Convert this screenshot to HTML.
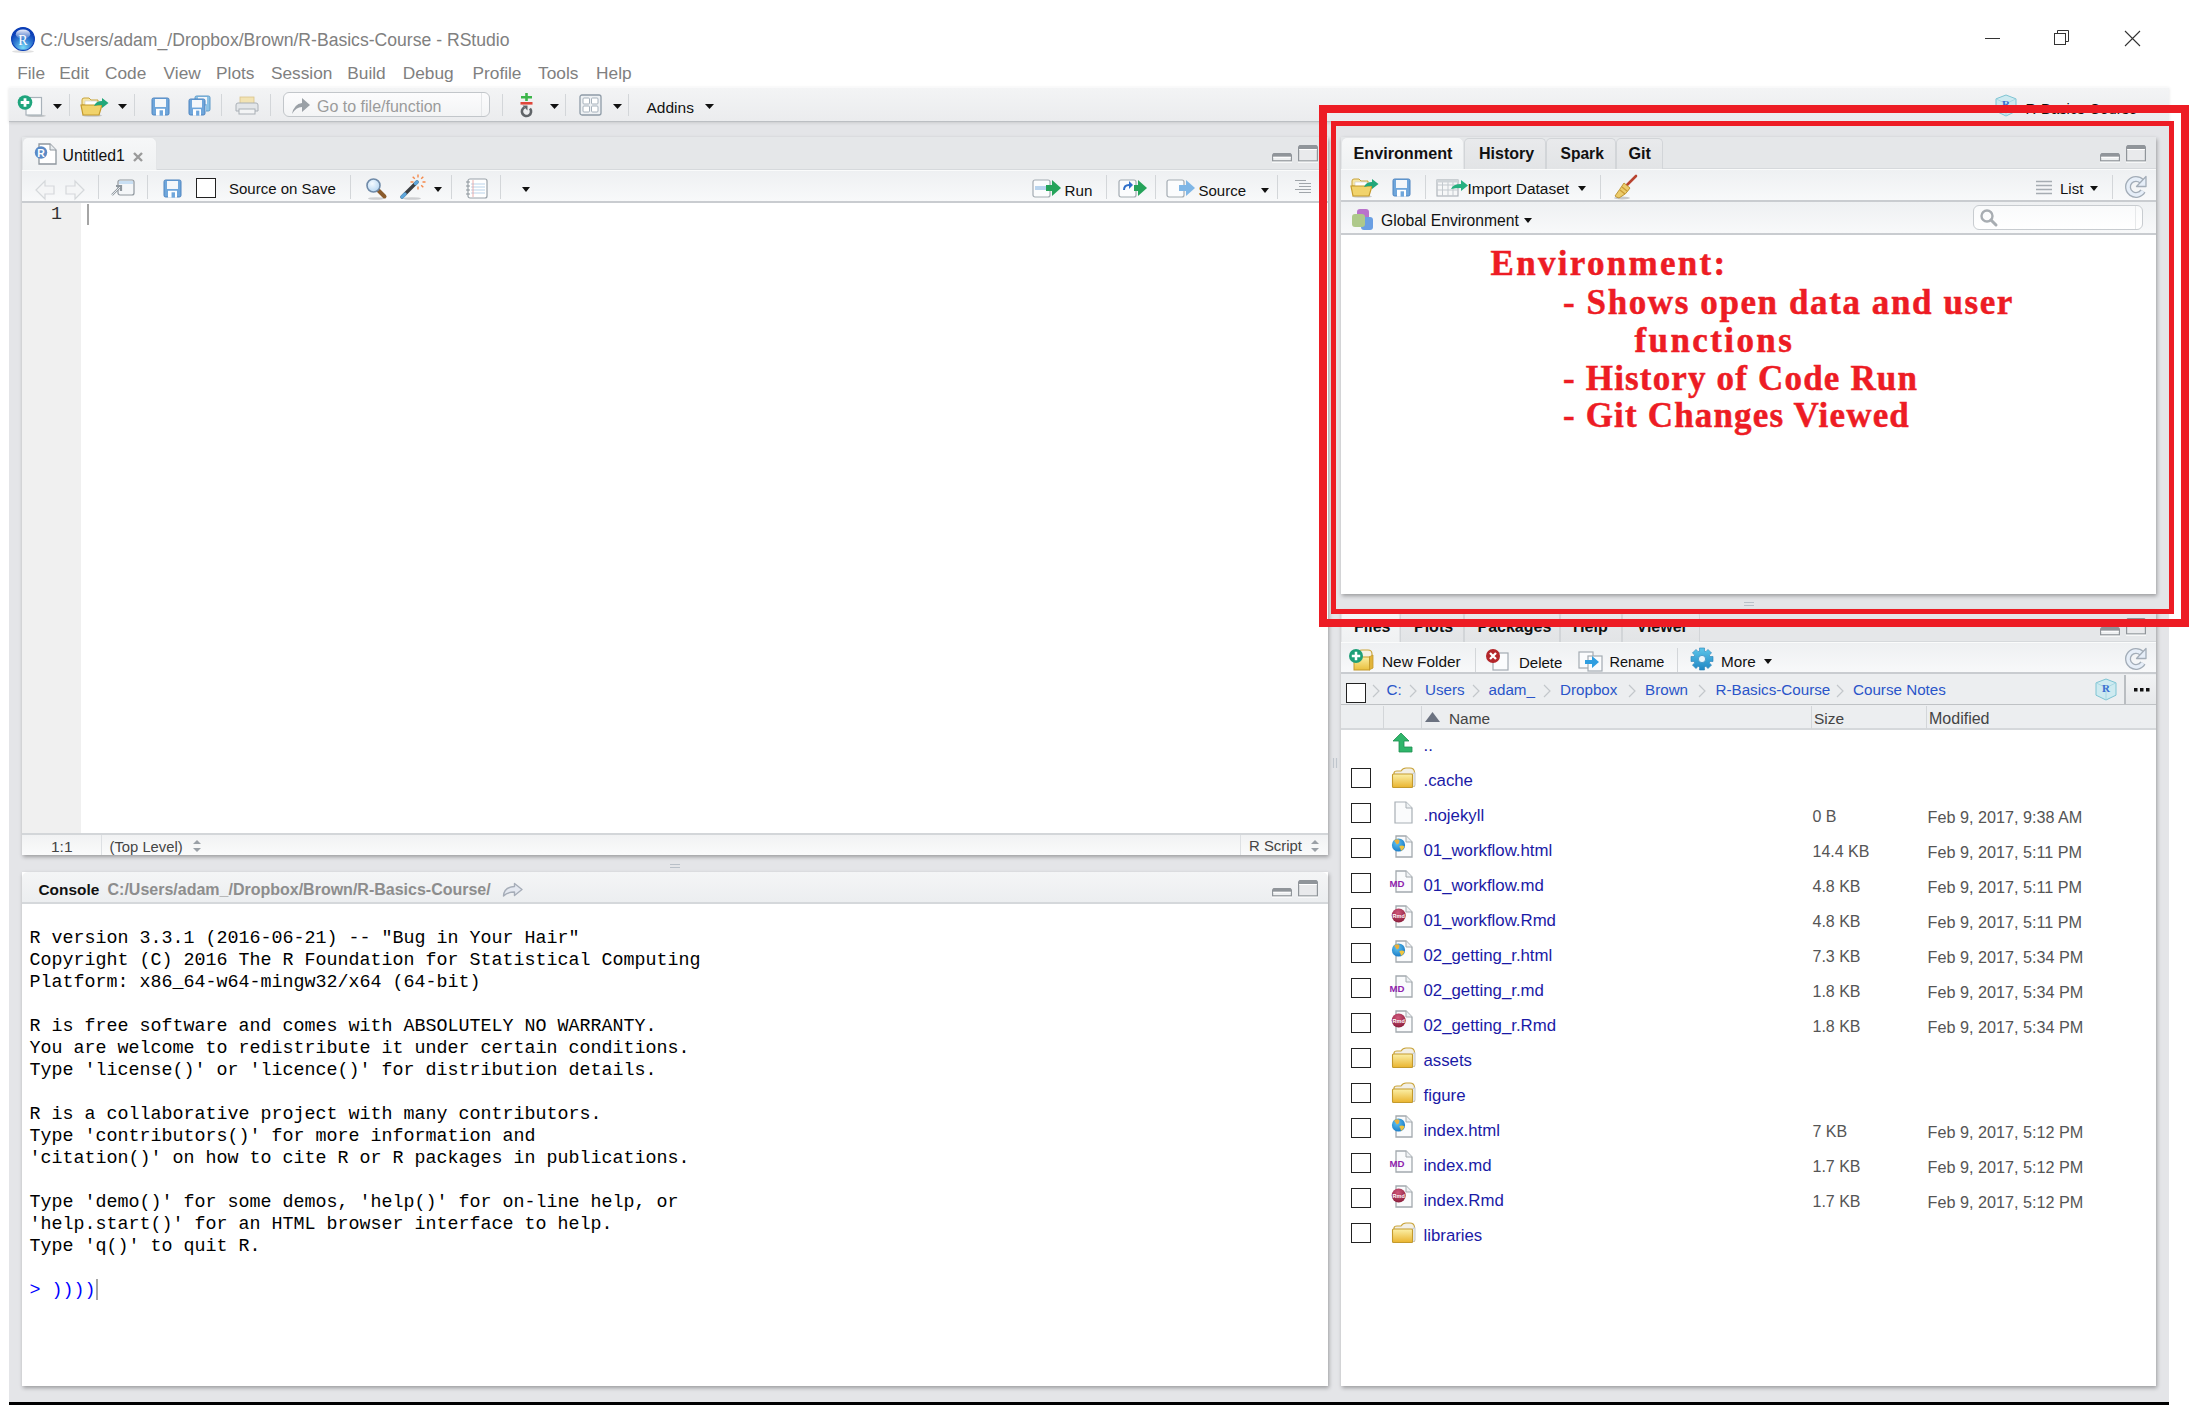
<!DOCTYPE html>
<html><head><meta charset="utf-8"><title>RStudio</title>
<style>
*{box-sizing:border-box;margin:0;padding:0}
html,body{width:2199px;height:1412px;overflow:hidden;background:#fff;position:relative;font-family:"Liberation Sans",sans-serif;color:#000}
.a{position:absolute;overflow:visible}
.t{position:absolute;white-space:pre;line-height:1}
</style></head>
<body>
<svg class="a" style="left:11px;top:27px" width="24" height="26" viewBox="0 0 24 26"><defs><radialGradient id="rlg" cx="50%" cy="88%" r="70%"><stop offset="0" stop-color="#78daf7"/><stop offset=".6" stop-color="#2f78d0"/><stop offset="1" stop-color="#0b3fb8"/></radialGradient>
<linearGradient id="rlh" x1="0" y1="0" x2="0" y2="1"><stop offset="0" stop-color="#fff" stop-opacity=".95"/><stop offset="1" stop-color="#fff" stop-opacity=".1"/></linearGradient></defs>
<ellipse cx="12.0" cy="24.5" rx="11.0" ry="1.5" fill="#000" opacity=".12"/>
<circle cx="12.0" cy="12.0" r="11.4" fill="url(#rlg)" stroke="#0a3db5" stroke-width="1.1"/>
<ellipse cx="12.0" cy="7.199999999999999" rx="7.199999999999999" ry="4.800000000000001" fill="url(#rlh)"/>
<text x="12.0" y="18.0" font-family="Liberation Serif" font-weight="400" font-size="13.919999999999998" fill="#fff" text-anchor="middle">R</text></svg>
<div class="t" style="left:40.2px;top:32.1px;font-size:17.6px;color:#808080;">C:/Users/adam_/Dropbox/Brown/R-Basics-Course - RStudio</div>
<div class="a" style="left:1985px;top:38px;width:15px;height:1px;background:#333"></div>
<svg class="a" style="left:2053px;top:29px" width="18" height="18" viewBox="0 0 18 18"><rect x="1.5" y="4.5" width="11" height="11" fill="none" stroke="#333" stroke-width="1"/><path d="M4.5 4.5V1.5H15.5V12.5H12.5" fill="none" stroke="#333" stroke-width="1"/></svg>
<svg class="a" style="left:2124px;top:30px" width="17" height="17" viewBox="0 0 17 17"><path d="M1 1L16 16M16 1L1 16" stroke="#333" stroke-width="1.1"/></svg>
<div class="t" style="left:17.2px;top:65.0px;font-size:17.3px;color:#808080;">File</div>
<div class="t" style="left:59.3px;top:65.0px;font-size:17.3px;color:#808080;">Edit</div>
<div class="t" style="left:105.0px;top:65.0px;font-size:17.3px;color:#808080;">Code</div>
<div class="t" style="left:163.6px;top:65.0px;font-size:17.3px;color:#808080;">View</div>
<div class="t" style="left:216.1px;top:65.0px;font-size:17.3px;color:#808080;">Plots</div>
<div class="t" style="left:270.9px;top:65.0px;font-size:17.3px;color:#808080;">Session</div>
<div class="t" style="left:347.3px;top:65.0px;font-size:17.3px;color:#808080;">Build</div>
<div class="t" style="left:402.7px;top:65.0px;font-size:17.3px;color:#808080;">Debug</div>
<div class="t" style="left:472.5px;top:65.0px;font-size:17.3px;color:#808080;">Profile</div>
<div class="t" style="left:538.1px;top:65.0px;font-size:17.3px;color:#808080;">Tools</div>
<div class="t" style="left:596.1px;top:65.0px;font-size:17.3px;color:#808080;">Help</div>
<div class="a" style="left:9px;top:87px;width:2160px;height:1317px;background:#e4e5e8"></div>
<div class="a" style="left:9px;top:87px;width:2160px;height:35px;background:linear-gradient(#f3f4f5,#ebecee);border-top:1px solid #f9f9fa;border-bottom:1.5px solid #bcbfc3;box-shadow:0 1px 3px rgba(0,0,0,.12)"></div>
<div class="a" style="left:9px;top:1402px;width:2160px;height:3px;background:#000"></div>
<svg class="a" style="left:16px;top:93px" width="32" height="26" viewBox="0 0 32 26"><ellipse cx="20" cy="22.8" rx="10" ry="1.3" fill="#7d8288" opacity=".4"/>
<rect x="10" y="4.5" width="15.5" height="17.5" fill="#fbfcfd" stroke="#a9b2ba" stroke-width="1.2"/>
<circle cx="9" cy="9.5" r="7.3" fill="#1fa57d"/><path d="M9 5.2V13.8M4.7 9.5H13.3" stroke="#fff" stroke-width="2.8"/></svg>
<svg class="a" style="left:53px;top:104px" width="9" height="5" viewBox="0 0 9 5"><path d="M0 0H9L4.5 5Z" fill="#111"/></svg>
<div class="a" style="left:69px;top:94px;width:1px;height:22px;background:#d3d6d9"></div>
<svg class="a" style="left:80px;top:95px" width="30" height="22" viewBox="0 0 30 22"><ellipse cx="12" cy="20.5" rx="10" ry="1.3" fill="#8c8f93" opacity=".4"/>
<path d="M2 5Q2 3 4 3H9L11 5H18V10H2Z" fill="#f6e6a6" stroke="#c9a43a" stroke-width="1"/>
<path d="M5 6H17V11H5Z" fill="#fff" stroke="#d0d0d0" stroke-width=".7"/>
<path d="M1 10H22L19 20H3Z" fill="#f1d36b" stroke="#c49a2c" stroke-width="1.2"/>
<path d="M14 11Q16 6 22 6V3L28.5 8L22 13V10Q17 10 14 11Z" fill="#22a77a"/></svg>
<svg class="a" style="left:118px;top:104px" width="9" height="5" viewBox="0 0 9 5"><path d="M0 0H9L4.5 5Z" fill="#111"/></svg>
<div class="a" style="left:134px;top:94px;width:1px;height:22px;background:#d3d6d9"></div>
<svg class="a" style="left:151px;top:97px" width="19" height="21" viewBox="0 0 19 21"><rect x="1" y="1" width="17" height="17" rx="1.6" fill="#6fa6db" stroke="#4f84bf" stroke-width="1"/>
<rect x="4" y="2" width="11" height="7.9799999999999995" fill="#f4f7fa"/>
<rect x="5" y="11.78" width="9" height="6.84" fill="#fff"/>
<rect x="8.55" y="13.299999999999999" width="3.42" height="5.32" fill="#6fa6db"/></svg>
<svg class="a" style="left:194px;top:95px" width="17" height="19" viewBox="0 0 17 19"><rect x="1" y="1" width="15" height="15" rx="1.6" fill="#8dc3e6" stroke="#5e9ac8" stroke-width="1"/>
<rect x="4" y="2" width="9" height="7.14" fill="#f4f7fa"/>
<rect x="5" y="10.54" width="7" height="6.12" fill="#fff"/>
<rect x="7.65" y="11.899999999999999" width="3.06" height="4.760000000000001" fill="#8dc3e6"/></svg>
<svg class="a" style="left:188px;top:98px" width="18" height="20" viewBox="0 0 18 20"><rect x="1" y="1" width="16" height="16" rx="1.6" fill="#6fa6db" stroke="#4f84bf" stroke-width="1"/>
<rect x="4" y="2" width="10" height="7.56" fill="#f4f7fa"/>
<rect x="5" y="11.16" width="8" height="6.4799999999999995" fill="#fff"/>
<rect x="8.1" y="12.6" width="3.2399999999999998" height="5.040000000000001" fill="#6fa6db"/></svg>
<div class="a" style="left:221px;top:94px;width:1px;height:22px;background:#d3d6d9"></div>
<svg class="a" style="left:235px;top:96px" width="24" height="20" viewBox="0 0 24 20"><rect x="5" y="1" width="14" height="9" fill="#f2e3b3" stroke="#d9c48a" stroke-width=".8"/>
<path d="M1 9Q1 7 3 7H21Q23 7 23 9V15H1Z" fill="#e3e6e9" stroke="#aab0b6" stroke-width="1"/>
<rect x="4" y="13" width="16" height="5" fill="#f3f4f5" stroke="#aab0b6" stroke-width="1"/></svg>
<div class="a" style="left:270px;top:94px;width:1px;height:22px;background:#d3d6d9"></div>
<div class="a" style="left:283px;top:92px;width:207px;height:25px;background:linear-gradient(#fcfcfd,#f3f4f5);border:1px solid #c2c6ca;border-radius:6px"></div>
<div class="a" style="left:481px;top:93px;width:1px;height:23px;background:#e4e6e8"></div>
<svg class="a" style="left:291px;top:97px" width="20" height="18" viewBox="0 0 20 18"><path d="M1 17Q3 7 11 6V1L19 8L11 15V10Q5 10 1 17Z" fill="#9aa0a6"/></svg>
<div class="t" style="left:317.0px;top:98.6px;font-size:16px;color:#9b9b9b;">Go to file/function</div>
<div class="a" style="left:502px;top:94px;width:1px;height:22px;background:#d3d6d9"></div>
<svg class="a" style="left:520px;top:93px" width="14" height="26" viewBox="0 0 14 26"><path d="M6.5 0V8M1 4.2H12" stroke="#3cb54a" stroke-width="2.6"/>
<rect x="0.5" y="9" width="12" height="2.6" fill="#e0463a"/>
<path d="M10 15.5A4.6 4.6 0 1 1 4.5 14.3" fill="none" stroke="#606468" stroke-width="2.6"/><path d="M2.5 12.5H7.5V17.5Z" fill="#606468"/></svg>
<svg class="a" style="left:550px;top:104px" width="9" height="5" viewBox="0 0 9 5"><path d="M0 0H9L4.5 5Z" fill="#111"/></svg>
<div class="a" style="left:565px;top:94px;width:1px;height:22px;background:#d3d6d9"></div>
<svg class="a" style="left:579px;top:94px" width="24" height="23" viewBox="0 0 24 23"><rect x="1" y="1" width="21" height="20" rx="2" fill="#eef1f4" stroke="#8e9ba7" stroke-width="1.3"/>
<rect x="4" y="4" width="6.5" height="6" rx="1" fill="#fff" stroke="#a6b1bb"/><rect x="12.5" y="4" width="6.5" height="6" rx="1" fill="#fff" stroke="#a6b1bb"/>
<rect x="4" y="12" width="6.5" height="6" rx="1" fill="#fff" stroke="#a6b1bb"/><rect x="12.5" y="12" width="6.5" height="6" rx="1" fill="#fff" stroke="#a6b1bb"/></svg>
<svg class="a" style="left:613px;top:104px" width="9" height="5" viewBox="0 0 9 5"><path d="M0 0H9L4.5 5Z" fill="#111"/></svg>
<div class="a" style="left:628px;top:94px;width:1px;height:22px;background:#d3d6d9"></div>
<div class="t" style="left:646.5px;top:100.3px;font-size:15.5px;color:#111;">Addins</div>
<svg class="a" style="left:705px;top:104px" width="9" height="5" viewBox="0 0 9 5"><path d="M0 0H9L4.5 5Z" fill="#111"/></svg>
<svg class="a" style="left:1995px;top:94px" width="22" height="24" viewBox="0 0 22 24"><path d="M11.0 1L21 4.84V17.16L11.0 22L1 17.16V4.84Z" fill="#cdeaf0" stroke="#7ec4d3" stroke-width="1"/>
<path d="M1 4.84L11.0 9.68L21 4.84M11.0 9.68V22" fill="none" stroke="#9fd4df" stroke-width=".8"/>
<text x="11.0" y="13.64" font-family="Liberation Serif" font-weight="700" font-size="11.0" fill="#3a6fd0" text-anchor="middle">R</text></svg>
<div class="t" style="left:2025.5px;top:101.7px;font-size:14.8px;color:#111;">R-Basics-Course</div>
<div class="a" style="left:22px;top:137px;width:1306px;height:717.5px;background:#fff;box-shadow:1px 2px 4px rgba(0,0,0,.32)"></div>
<div class="a" style="left:22px;top:137px;width:1306px;height:33px;background:#e5e7e9;border-bottom:1px solid #d6d9dc"></div>
<div class="a" style="left:22px;top:137px;width:135px;height:34px;background:linear-gradient(#f6f7f8,#eff1f2);border-radius:6px 6px 0 0;border:1px solid #e3e5e7;border-bottom:none"></div>
<svg class="a" style="left:32px;top:142px" width="26" height="24" viewBox="0 0 26 24"><path d="M7 2H18L24 8V22H7Z" fill="#fff" stroke="#8f979e" stroke-width="1.3"/><path d="M18 2V8H24" fill="#e8ecef" stroke="#8f979e" stroke-width="1"/>
<circle cx="9" cy="10.5" r="6.2" fill="#5b8ac6"/><text x="9" y="14.5" font-family="Liberation Sans" font-weight="700" font-size="10.5" fill="#fff" text-anchor="middle">R</text></svg>
<div class="t" style="left:62.5px;top:147.5px;font-size:15.8px;color:#111;">Untitled1</div>
<svg class="a" style="left:132px;top:151px" width="12" height="12" viewBox="0 0 12 12"><path d="M2 2L10 10M10 2L2 10" stroke="#9a9a9a" stroke-width="2.4"/></svg>
<svg class="a" style="left:1272px;top:153px" width="20" height="10" viewBox="0 0 20 10"><path d="M1.5 0H18.5L20 1.5V8.5H0V1.5Z" fill="#90959a"/><rect x="1.2" y="3.8" width="17.6" height="3.4" fill="#eef0f1"/><rect x="1.2" y="3.8" width="17.6" height="1" fill="#fff"/><rect x="0" y="8.6" width="20" height="1.2" fill="#fff" opacity=".8"/></svg>
<svg class="a" style="left:1298px;top:144.5px" width="20" height="18" viewBox="0 0 20 18"><path d="M1.5 0H18.5L20 1.5V16.5H0V1.5Z" fill="#90959a"/><rect x="1.2" y="4" width="17.6" height="11.3" fill="#e9eaec"/><rect x="1.2" y="4" width="17.6" height="1" fill="#fff"/><rect x="0" y="16.6" width="20" height="1.2" fill="#fff" opacity=".8"/></svg>
<div class="a" style="left:22px;top:170px;width:1306px;height:33px;background:linear-gradient(#eef0f2,#f8f9fa);border-top:1px solid #fafbfb;border-bottom:2px solid #c9ccd0"></div>
<svg class="a" style="left:35px;top:180px" width="20" height="20" viewBox="0 0 20 20"><path d="M1 10L10 1V6H19V14H10V19Z" fill="#f4f5f6" stroke="#d5d8db" stroke-width="1.2"/></svg>
<svg class="a" style="left:65px;top:180px" width="20" height="20" viewBox="0 0 20 20"><path d="M19 10L10 1V6H1V14H10V19Z" fill="#f4f5f6" stroke="#d5d8db" stroke-width="1.2"/></svg>
<div class="a" style="left:98px;top:175px;width:1px;height:24px;background:#d3d6d9"></div>
<svg class="a" style="left:110px;top:178px" width="26" height="20" viewBox="0 0 26 20"><rect x="8" y="2" width="16" height="15" rx="2" fill="#f4f6f8" stroke="#8f979e" stroke-width="1.2"/><rect x="9" y="3" width="14" height="3" fill="#c9dff3"/>
<path d="M2 17L10 9M6 8H11V13" fill="none" stroke="#8f979e" stroke-width="2.2"/><path d="M2 17L10 9" stroke="#e6e9ec" stroke-width="1"/></svg>
<div class="a" style="left:147px;top:175px;width:1px;height:24px;background:#d3d6d9"></div>
<svg class="a" style="left:163px;top:179px" width="19" height="21" viewBox="0 0 19 21"><rect x="1" y="1" width="17" height="17" rx="1.6" fill="#6fa6db" stroke="#4f84bf" stroke-width="1"/>
<rect x="4" y="2" width="11" height="7.9799999999999995" fill="#f4f7fa"/>
<rect x="5" y="11.78" width="9" height="6.84" fill="#fff"/>
<rect x="8.55" y="13.299999999999999" width="3.42" height="5.32" fill="#6fa6db"/></svg>
<div class="a" style="left:196px;top:178px;width:20px;height:20px;background:#fff;border:1.5px solid #222"></div>
<div class="t" style="left:229.0px;top:180.8px;font-size:15px;color:#111;">Source on Save</div>
<div class="a" style="left:350px;top:175px;width:1px;height:24px;background:#d3d6d9"></div>
<svg class="a" style="left:365px;top:177px" width="24" height="24" viewBox="0 0 24 24"><defs><radialGradient id="mgl" cx="40%" cy="35%" r="65%"><stop offset="0" stop-color="#f4faff"/><stop offset="1" stop-color="#b9d8f3"/></radialGradient></defs>
<ellipse cx="11" cy="21.5" rx="8" ry="1.3" fill="#7d8288" opacity=".35"/>
<path d="M13.5 13.5L19.5 19.5" stroke="#8a5a2b" stroke-width="4" stroke-linecap="round"/>
<circle cx="8.5" cy="8.5" r="6.5" fill="url(#mgl)" stroke="#6f8aa8" stroke-width="1.6"/></svg>
<svg class="a" style="left:399px;top:175px" width="28" height="26" viewBox="0 0 28 26"><ellipse cx="13" cy="23.5" rx="9" ry="1.3" fill="#7d8288" opacity=".35"/>
<path d="M3 22L18 7" stroke="#3a3d41" stroke-width="3.4" stroke-linecap="round"/><path d="M3 22L6 19M16.5 8.5L18 7" stroke="#5ea6dc" stroke-width="3.4" stroke-linecap="round"/>
<path d="M19.0 2.5L19.0 -0.5M22.2 3.8L24.3 1.7M23.5 7.0L26.5 7.0M22.2 10.2L24.3 12.3M19.0 11.5L19.0 14.5M14.5 7.0L11.5 7.0M15.8 3.8L13.7 1.7" stroke="#f5894a" stroke-width="1.4"/></svg>
<svg class="a" style="left:434px;top:187px" width="8" height="5" viewBox="0 0 8 5"><path d="M0 0H8L4.0 5Z" fill="#111"/></svg>
<div class="a" style="left:451px;top:175px;width:1px;height:24px;background:#d3d6d9"></div>
<svg class="a" style="left:465px;top:178px" width="24" height="22" viewBox="0 0 24 22"><rect x="3" y="1" width="19" height="19" rx="2" fill="#fff" stroke="#9aa2a9" stroke-width="1.2"/>
<path d="M6 6H20M6 9H20M6 12H20M6 15H20" stroke="#b9d3ea" stroke-width="1"/><path d="M8 2V19" stroke="#e79b9b" stroke-width=".8"/>
<path d="M1 4H5M1 8H5M1 12H5M1 16H5" stroke="#8e959b" stroke-width="1.2"/></svg>
<div class="a" style="left:500px;top:175px;width:1px;height:24px;background:#d3d6d9"></div>
<svg class="a" style="left:522px;top:187px" width="8" height="5" viewBox="0 0 8 5"><path d="M0 0H8L4.0 5Z" fill="#111"/></svg>
<svg class="a" style="left:1032px;top:177.5px" width="30" height="22" viewBox="0 0 30 22"><rect x="1" y="2" width="17" height="17" rx="2" fill="#fbfcfd" stroke="#a3abb2" stroke-width="1.2"/><rect x="3" y="8" width="11" height="4" fill="#b9d4ee"/>
<path d="M14 7H20V2L29 10L20 18V13H14Z" fill="#25a35a"/></svg>
<div class="t" style="left:1064.5px;top:183.0px;font-size:15.2px;color:#111;">Run</div>
<div class="a" style="left:1106px;top:175px;width:1px;height:24px;background:#d3d6d9"></div>
<svg class="a" style="left:1118px;top:177.5px" width="30" height="22" viewBox="0 0 30 22"><rect x="1" y="2" width="17" height="17" rx="2" fill="#fbfcfd" stroke="#a3abb2" stroke-width="1.2"/>
<path d="M5 12Q5 6 11 6V3L15 7L11 11V8Q7 8 7 12Z" fill="#2f6fc9"/>
<path d="M16 7H20V2L29 10L20 18V13H16Z" fill="#25a35a"/></svg>
<div class="a" style="left:1155px;top:175px;width:1px;height:24px;background:#d3d6d9"></div>
<svg class="a" style="left:1166px;top:177.5px" width="30" height="22" viewBox="0 0 30 22"><rect x="1" y="2" width="17" height="17" rx="2" fill="#fbfcfd" stroke="#a3abb2" stroke-width="1.2"/>
<path d="M13 7H20V2L29 10L20 18V13H13Z" fill="#7fb6e6"/></svg>
<div class="t" style="left:1198.5px;top:183.2px;font-size:15px;color:#111;">Source</div>
<svg class="a" style="left:1261px;top:188px" width="8" height="5" viewBox="0 0 8 5"><path d="M0 0H8L4.0 5Z" fill="#111"/></svg>
<div class="a" style="left:1277px;top:175px;width:1px;height:24px;background:#d3d6d9"></div>
<svg class="a" style="left:1294px;top:179px" width="18" height="16" viewBox="0 0 18 16"><path d="M1 1.5H12M5 4.5H17M5 7.5H17M1 10.5H17M5 13.5H17" stroke="#a0a5aa" stroke-width="1.1"/></svg>
<div class="a" style="left:22px;top:203px;width:59px;height:631px;background:#f0f0f0"></div>
<div class="t" style="left:51.0px;top:205.6px;font-size:18.33px;color:#333;font-family:'Liberation Mono',monospace;">1</div>
<div class="a" style="left:87px;top:204px;width:2px;height:21px;background:#a5a5a5"></div>
<div class="a" style="left:22px;top:833px;width:1306px;height:21.5px;background:linear-gradient(#f1f2f3,#fafbfb);border-top:2px solid #d3d6d9"></div>
<div class="t" style="left:51.0px;top:839.2px;font-size:15.5px;color:#444;">1:1</div>
<div class="a" style="left:101px;top:835px;width:1px;height:20px;background:#dde0e3"></div>
<div class="t" style="left:109.5px;top:839.8px;font-size:14.8px;color:#444;">(Top Level)</div>
<svg class="a" style="left:192px;top:839px" width="10" height="14" viewBox="0 0 10 14"><path d="M1 5L5 1L9 5Z M1 9L5 13L9 9Z" fill="#9aa0a6"/></svg>
<div class="a" style="left:1240px;top:835px;width:1px;height:20px;background:#dde0e3"></div>
<div class="t" style="left:1249.0px;top:839.1px;font-size:14.9px;color:#444;">R Script</div>
<svg class="a" style="left:1310px;top:839px" width="10" height="14" viewBox="0 0 10 14"><path d="M1 5L5 1L9 5Z M1 9L5 13L9 9Z" fill="#9aa0a6"/></svg>
<svg class="a" style="left:669px;top:863px" width="12" height="6" viewBox="0 0 12 6"><path d="M1 1.5H11M1 4.5H11" stroke="#b9c0c8" stroke-width="1.2"/></svg>
<div class="a" style="left:22px;top:872px;width:1306px;height:514px;background:#fff;box-shadow:1px 2px 4px rgba(0,0,0,.32)"></div>
<div class="a" style="left:22px;top:872px;width:1306px;height:32px;background:linear-gradient(#f4f5f6,#eceef0);border-radius:6px 6px 0 0;border-bottom:2px solid #d5d8db"></div>
<div class="t" style="left:38.5px;top:882.4px;font-size:15.4px;color:#111;font-weight:700;">Console</div>
<div class="t" style="left:107.5px;top:881.9px;font-size:16px;color:#8d8d8d;font-weight:700;">C:/Users/adam_/Dropbox/Brown/R-Basics-Course/</div>
<svg class="a" style="left:502px;top:882px" width="22" height="16" viewBox="0 0 22 16"><path d="M1.5 14Q2 5 12.5 4.5V1.5L20 7.5L12.5 13.5V10Q5 10 1.5 14Z" fill="#e4e8f0" stroke="#a6adb8" stroke-width="1.4" stroke-linejoin="round"/></svg>
<svg class="a" style="left:1272px;top:888px" width="20" height="10" viewBox="0 0 20 10"><path d="M1.5 0H18.5L20 1.5V8.5H0V1.5Z" fill="#90959a"/><rect x="1.2" y="3.8" width="17.6" height="3.4" fill="#eef0f1"/><rect x="1.2" y="3.8" width="17.6" height="1" fill="#fff"/><rect x="0" y="8.6" width="20" height="1.2" fill="#fff" opacity=".8"/></svg>
<svg class="a" style="left:1298px;top:879.5px" width="20" height="18" viewBox="0 0 20 18"><path d="M1.5 0H18.5L20 1.5V16.5H0V1.5Z" fill="#90959a"/><rect x="1.2" y="4" width="17.6" height="11.3" fill="#e9eaec"/><rect x="1.2" y="4" width="17.6" height="1" fill="#fff"/><rect x="0" y="16.6" width="20" height="1.2" fill="#fff" opacity=".8"/></svg>
<div class="t" style="left:29.5px;top:929.6px;font-size:18.33px;color:#000;font-family:'Liberation Mono',monospace;">R version 3.3.1 (2016-06-21) -- "Bug in Your Hair"</div>
<div class="t" style="left:29.5px;top:951.6px;font-size:18.33px;color:#000;font-family:'Liberation Mono',monospace;">Copyright (C) 2016 The R Foundation for Statistical Computing</div>
<div class="t" style="left:29.5px;top:973.6px;font-size:18.33px;color:#000;font-family:'Liberation Mono',monospace;">Platform: x86_64-w64-mingw32/x64 (64-bit)</div>
<div class="t" style="left:29.5px;top:1017.6px;font-size:18.33px;color:#000;font-family:'Liberation Mono',monospace;">R is free software and comes with ABSOLUTELY NO WARRANTY.</div>
<div class="t" style="left:29.5px;top:1039.6px;font-size:18.33px;color:#000;font-family:'Liberation Mono',monospace;">You are welcome to redistribute it under certain conditions.</div>
<div class="t" style="left:29.5px;top:1061.6px;font-size:18.33px;color:#000;font-family:'Liberation Mono',monospace;">Type 'license()' or 'licence()' for distribution details.</div>
<div class="t" style="left:29.5px;top:1105.6px;font-size:18.33px;color:#000;font-family:'Liberation Mono',monospace;">R is a collaborative project with many contributors.</div>
<div class="t" style="left:29.5px;top:1127.6px;font-size:18.33px;color:#000;font-family:'Liberation Mono',monospace;">Type 'contributors()' for more information and</div>
<div class="t" style="left:29.5px;top:1149.6px;font-size:18.33px;color:#000;font-family:'Liberation Mono',monospace;">'citation()' on how to cite R or R packages in publications.</div>
<div class="t" style="left:29.5px;top:1193.6px;font-size:18.33px;color:#000;font-family:'Liberation Mono',monospace;">Type 'demo()' for some demos, 'help()' for on-line help, or</div>
<div class="t" style="left:29.5px;top:1215.6px;font-size:18.33px;color:#000;font-family:'Liberation Mono',monospace;">'help.start()' for an HTML browser interface to help.</div>
<div class="t" style="left:29.5px;top:1237.6px;font-size:18.33px;color:#000;font-family:'Liberation Mono',monospace;">Type 'q()' to quit R.</div>
<div class="t" style="left:29.5px;top:1281.6px;font-size:18.33px;color:#0000ff;font-family:'Liberation Mono',monospace;">&gt; ))))</div>
<div class="a" style="left:96px;top:1279px;width:2px;height:21px;background:#a5a5a5"></div>
<svg class="a" style="left:1332px;top:757px" width="6" height="12" viewBox="0 0 6 12"><path d="M1.5 1V11M4.5 1V11" stroke="#c0c6cd" stroke-width="1.2"/></svg>
<div class="a" style="left:1341px;top:137px;width:815px;height:457px;background:#fff;box-shadow:1px 2px 4px rgba(0,0,0,.32)"></div>
<div class="a" style="left:1341px;top:137px;width:815px;height:32px;background:#e5e7e9;border-bottom:1px solid #d6d9dc"></div>
<div class="a" style="left:1341px;top:137px;width:123px;height:33px;background:linear-gradient(#f6f7f8,#eff1f2);border-radius:6px 6px 0 0;border:1px solid #e3e5e7;border-bottom:none"></div>
<div class="a" style="left:1464px;top:138px;width:82px;height:31px;background:linear-gradient(#e9eaec,#e2e4e6);border-radius:5px 5px 0 0;border:1px solid #d2d5d8;border-bottom:none"></div>
<div class="a" style="left:1546px;top:138px;width:70px;height:31px;background:linear-gradient(#e9eaec,#e2e4e6);border-radius:5px 5px 0 0;border:1px solid #d2d5d8;border-bottom:none"></div>
<div class="a" style="left:1616px;top:138px;width:47px;height:31px;background:linear-gradient(#e9eaec,#e2e4e6);border-radius:5px 5px 0 0;border:1px solid #d2d5d8;border-bottom:none"></div>
<div class="t" style="left:1353.5px;top:144.9px;font-size:16.2px;color:#111;font-weight:700;">Environment</div>
<div class="t" style="left:1479.0px;top:145.6px;font-size:16px;color:#111;font-weight:700;">History</div>
<div class="t" style="left:1560.5px;top:145.9px;font-size:15.6px;color:#111;font-weight:700;">Spark</div>
<div class="t" style="left:1628.5px;top:144.9px;font-size:16.2px;color:#111;font-weight:700;">Git</div>
<svg class="a" style="left:2100px;top:153px" width="20" height="10" viewBox="0 0 20 10"><path d="M1.5 0H18.5L20 1.5V8.5H0V1.5Z" fill="#90959a"/><rect x="1.2" y="3.8" width="17.6" height="3.4" fill="#eef0f1"/><rect x="1.2" y="3.8" width="17.6" height="1" fill="#fff"/><rect x="0" y="8.6" width="20" height="1.2" fill="#fff" opacity=".8"/></svg>
<svg class="a" style="left:2126px;top:144.5px" width="20" height="18" viewBox="0 0 20 18"><path d="M1.5 0H18.5L20 1.5V16.5H0V1.5Z" fill="#90959a"/><rect x="1.2" y="4" width="17.6" height="11.3" fill="#e9eaec"/><rect x="1.2" y="4" width="17.6" height="1" fill="#fff"/><rect x="0" y="16.6" width="20" height="1.2" fill="#fff" opacity=".8"/></svg>
<div class="a" style="left:1341px;top:169px;width:815px;height:33px;background:linear-gradient(#eef0f2,#f8f9fa);border-top:1px solid #fafbfb;border-bottom:2px solid #c9ccd0"></div>
<svg class="a" style="left:1350px;top:176px" width="30" height="22" viewBox="0 0 30 22"><ellipse cx="12" cy="20.5" rx="10" ry="1.3" fill="#8c8f93" opacity=".4"/>
<path d="M2 5Q2 3 4 3H9L11 5H18V10H2Z" fill="#f6e6a6" stroke="#c9a43a" stroke-width="1"/>
<path d="M5 6H17V11H5Z" fill="#fff" stroke="#d0d0d0" stroke-width=".7"/>
<path d="M1 10H22L19 20H3Z" fill="#f1d36b" stroke="#c49a2c" stroke-width="1.2"/>
<path d="M14 11Q16 6 22 6V3L28.5 8L22 13V10Q17 10 14 11Z" fill="#22a77a"/></svg>
<svg class="a" style="left:1392px;top:178px" width="19" height="21" viewBox="0 0 19 21"><rect x="1" y="1" width="17" height="17" rx="1.6" fill="#6fa6db" stroke="#4f84bf" stroke-width="1"/>
<rect x="4" y="2" width="11" height="7.9799999999999995" fill="#f4f7fa"/>
<rect x="5" y="11.78" width="9" height="6.84" fill="#fff"/>
<rect x="8.55" y="13.299999999999999" width="3.42" height="5.32" fill="#6fa6db"/></svg>
<div class="a" style="left:1425px;top:175px;width:1px;height:24px;background:#d3d6d9"></div>
<svg class="a" style="left:1436px;top:176px" width="34" height="22" viewBox="0 0 34 22"><rect x="1" y="4" width="21" height="16" fill="#f6f7f8" stroke="#a9b0b6" stroke-width="1.1"/>
<path d="M1 9H22M1 14H22M6.5 4V20M12 4V20M17 4V20" stroke="#c3c9ce" stroke-width="1"/><rect x="1" y="4" width="21" height="2.5" fill="#cfd4d8"/>
<path d="M15 13Q17 8 25 8V4L32 9.5L25 15V12Q19 12 15 13Z" fill="#26b07f"/></svg>
<div class="t" style="left:1467.5px;top:180.6px;font-size:15.5px;color:#111;">Import Dataset</div>
<svg class="a" style="left:1578px;top:186px" width="8" height="5" viewBox="0 0 8 5"><path d="M0 0H8L4.0 5Z" fill="#111"/></svg>
<div class="a" style="left:1600px;top:175px;width:1px;height:24px;background:#d3d6d9"></div>
<svg class="a" style="left:1613px;top:175px" width="26" height="26" viewBox="0 0 26 26"><ellipse cx="9" cy="23" rx="8" ry="1.5" fill="#8c8f93" opacity=".45"/>
<path d="M23 1L14 10" stroke="#b8432f" stroke-width="2.6" stroke-linecap="round"/>
<path d="M11 8L17 13Q14 19 6 23Q3 22 2 21Q7 14 11 8Z" fill="#eccb6a" stroke="#b8902e" stroke-width=".9"/>
<path d="M9 12L14 16M7 15L12 19" stroke="#c99a36" stroke-width="1.2"/></svg>
<svg class="a" style="left:2035px;top:180px" width="18" height="16" viewBox="0 0 18 16"><path d="M1 1.5H17M1 5.5H17M1 9.5H17M1 13.5H17" stroke="#a6acb2" stroke-width="1.4"/></svg>
<div class="t" style="left:2060.0px;top:181.1px;font-size:15px;color:#111;">List</div>
<svg class="a" style="left:2090px;top:186px" width="8" height="5" viewBox="0 0 8 5"><path d="M0 0H8L4.0 5Z" fill="#111"/></svg>
<div class="a" style="left:2112px;top:175px;width:1px;height:24px;background:#d3d6d9"></div>
<svg class="a" style="left:2124px;top:175px" width="24" height="24" viewBox="0 0 24 24"><path d="M17.7 6.3A8 8 0 1 0 18.9 16" fill="none" stroke="#a3adb8" stroke-width="6"/><path d="M17.7 6.3A8 8 0 1 0 18.9 16" fill="none" stroke="#e6eef8" stroke-width="3.4"/>
<path d="M22 1.5V11.5H12.5Z" fill="#e6eef8" stroke="#a3adb8" stroke-width="1.3" stroke-linejoin="round"/></svg>
<div class="a" style="left:1341px;top:202px;width:815px;height:33px;background:linear-gradient(#eef0f2,#f8f9fa);border-bottom:2px solid #c9ccd0"></div>
<svg class="a" style="left:1351px;top:208px" width="24" height="24" viewBox="0 0 24 24"><rect x="6" y="1" width="12" height="12" rx="3" fill="#b972cc"/><rect x="10" y="9" width="12" height="13" rx="3" fill="#6a9fe3"/><rect x="1" y="6" width="13" height="13" rx="3" fill="#aec98a"/></svg>
<div class="t" style="left:1381.0px;top:213.0px;font-size:15.7px;color:#111;">Global Environment</div>
<svg class="a" style="left:1524px;top:218px" width="8" height="5" viewBox="0 0 8 5"><path d="M0 0H8L4.0 5Z" fill="#111"/></svg>
<div class="a" style="left:1973px;top:205px;width:170px;height:25px;background:linear-gradient(#f9fafb,#fff);border:1px solid #c8ccd0;border-radius:6px"></div>
<div class="a" style="left:2135px;top:206px;width:1px;height:23px;background:#e6e8ea"></div>
<svg class="a" style="left:1979px;top:208px" width="20" height="20" viewBox="0 0 20 20"><circle cx="8" cy="8" r="5.5" fill="none" stroke="#a8adb2" stroke-width="2.4"/><path d="M12 12L17 17" stroke="#a8adb2" stroke-width="3" stroke-linecap="round"/></svg>
<svg class="a" style="left:1743px;top:601px" width="12" height="6" viewBox="0 0 12 6"><path d="M1 1.5H11M1 4.5H11" stroke="#b9c0c8" stroke-width="1.2"/></svg>
<div class="t" style="left:1490.5px;top:246.4px;font-size:35px;color:#ed1c24;font-weight:700;font-family:'Liberation Serif',serif;letter-spacing:2.3px;-webkit-text-stroke:.5px #ed1c24">Environment:</div>
<div class="t" style="left:1563.0px;top:284.8px;font-size:35px;color:#ed1c24;font-weight:700;font-family:'Liberation Serif',serif;letter-spacing:1.6px;-webkit-text-stroke:.5px #ed1c24">- Shows open data and user</div>
<div class="t" style="left:1634.5px;top:322.6px;font-size:35px;color:#ed1c24;font-weight:700;font-family:'Liberation Serif',serif;letter-spacing:2.4px;-webkit-text-stroke:.5px #ed1c24">functions</div>
<div class="t" style="left:1563.0px;top:360.8px;font-size:35px;color:#ed1c24;font-weight:700;font-family:'Liberation Serif',serif;letter-spacing:1.17px;-webkit-text-stroke:.5px #ed1c24">- History of Code Run</div>
<div class="t" style="left:1563.0px;top:397.9px;font-size:35px;color:#ed1c24;font-weight:700;font-family:'Liberation Serif',serif;letter-spacing:1.16px;-webkit-text-stroke:.5px #ed1c24">- Git Changes Viewed</div>
<div class="a" style="left:1341px;top:610px;width:815px;height:776px;background:#fff;box-shadow:1px 2px 4px rgba(0,0,0,.32)"></div>
<div class="a" style="left:1341px;top:610px;width:815px;height:32px;background:#e5e7e9;border-bottom:1px solid #d6d9dc"></div>
<div class="a" style="left:1341px;top:610px;width:59px;height:33px;background:linear-gradient(#f6f7f8,#eff1f2);border-radius:6px 6px 0 0;border:1px solid #e3e5e7;border-bottom:none"></div>
<div class="a" style="left:1400px;top:611px;width:64px;height:31px;background:linear-gradient(#e9eaec,#e2e4e6);border-radius:5px 5px 0 0;border:1px solid #d2d5d8;border-bottom:none"></div>
<div class="a" style="left:1464px;top:611px;width:96px;height:31px;background:linear-gradient(#e9eaec,#e2e4e6);border-radius:5px 5px 0 0;border:1px solid #d2d5d8;border-bottom:none"></div>
<div class="a" style="left:1560px;top:611px;width:62px;height:31px;background:linear-gradient(#e9eaec,#e2e4e6);border-radius:5px 5px 0 0;border:1px solid #d2d5d8;border-bottom:none"></div>
<div class="a" style="left:1622px;top:611px;width:78px;height:31px;background:linear-gradient(#e9eaec,#e2e4e6);border-radius:5px 5px 0 0;border:1px solid #d2d5d8;border-bottom:none"></div>
<div class="t" style="left:1354.0px;top:619.1px;font-size:16px;color:#111;font-weight:700;">Files</div>
<div class="t" style="left:1414.0px;top:619.1px;font-size:16px;color:#111;font-weight:700;">Plots</div>
<div class="t" style="left:1477.5px;top:619.1px;font-size:16px;color:#111;font-weight:700;">Packages</div>
<div class="t" style="left:1573.0px;top:619.1px;font-size:16px;color:#111;font-weight:700;">Help</div>
<div class="t" style="left:1636.5px;top:619.1px;font-size:16px;color:#111;font-weight:700;">Viewer</div>
<svg class="a" style="left:2100px;top:626.5px" width="20" height="10" viewBox="0 0 20 10"><path d="M1.5 0H18.5L20 1.5V8.5H0V1.5Z" fill="#90959a"/><rect x="1.2" y="3.8" width="17.6" height="3.4" fill="#eef0f1"/><rect x="1.2" y="3.8" width="17.6" height="1" fill="#fff"/><rect x="0" y="8.6" width="20" height="1.2" fill="#fff" opacity=".8"/></svg>
<svg class="a" style="left:2126px;top:617.5px" width="20" height="18" viewBox="0 0 20 18"><path d="M1.5 0H18.5L20 1.5V16.5H0V1.5Z" fill="#90959a"/><rect x="1.2" y="4" width="17.6" height="11.3" fill="#e9eaec"/><rect x="1.2" y="4" width="17.6" height="1" fill="#fff"/><rect x="0" y="16.6" width="20" height="1.2" fill="#fff" opacity=".8"/></svg>
<div class="a" style="left:1341px;top:642px;width:815px;height:32px;background:linear-gradient(#eef0f2,#f8f9fa);border-top:1px solid #fafbfb;border-bottom:2px solid #c9ccd0"></div>
<svg class="a" style="left:1348px;top:648px" width="30" height="24" viewBox="0 0 30 24"><defs><linearGradient id="nfg" x1="0" y1="0" x2="0" y2="1"><stop offset="0" stop-color="#fbeea0"/><stop offset="1" stop-color="#e9bf3c"/></linearGradient></defs>
<path d="M10 6Q10 2 14 2H20Q24 2 24 6V20H10Z" fill="#f4f1e4" stroke="#c9a43a" stroke-width="1.1"/>
<path d="M21 9L25 7V20L21 22Z" fill="#e2b43a" stroke="#c49a2c" stroke-width=".8"/>
<rect x="6" y="9" width="15.5" height="13" fill="url(#nfg)" stroke="#c49a2c" stroke-width="1"/>
<circle cx="8" cy="8" r="7" fill="#1e9f78"/><path d="M8 3.8V12.2M3.8 8H12.2" stroke="#fff" stroke-width="2.5"/></svg>
<div class="t" style="left:1382.0px;top:654.3px;font-size:15.4px;color:#111;">New Folder</div>
<div class="a" style="left:1475px;top:648px;width:1px;height:24px;background:#d3d6d9"></div>
<svg class="a" style="left:1485px;top:648px" width="28" height="24" viewBox="0 0 28 24"><rect x="8" y="5" width="15" height="17" fill="#fbfcfd" stroke="#a3abb2" stroke-width="1.2"/>
<circle cx="8" cy="8" r="7" fill="#b3262a"/><path d="M5 5L11 11M11 5L5 11" stroke="#fff" stroke-width="2.3"/></svg>
<div class="t" style="left:1519.0px;top:654.6px;font-size:15px;color:#111;">Delete</div>
<svg class="a" style="left:1578px;top:650px" width="28" height="22" viewBox="0 0 28 22"><rect x="1" y="2" width="14" height="16" fill="#fbfcfd" stroke="#a3abb2" stroke-width="1.2"/><rect x="10" y="6" width="14" height="15" fill="#fbfcfd" stroke="#a3abb2" stroke-width="1.2"/>
<path d="M7 10H14V6L21 12L14 18V14H7Z" fill="#2f9ee0"/></svg>
<div class="t" style="left:1609.5px;top:655.1px;font-size:14.5px;color:#111;">Rename</div>
<div class="a" style="left:1677px;top:648px;width:1px;height:24px;background:#d3d6d9"></div>
<svg class="a" style="left:1690px;top:647px" width="24" height="24" viewBox="0 0 24 24"><defs><linearGradient id="gg" x1="0" y1="0" x2="0" y2="1"><stop offset="0" stop-color="#5cc6ea"/><stop offset="1" stop-color="#1f86c4"/></linearGradient></defs>
<polygon points="19.94,9.57 23.01,9.46 23.01,14.54 19.94,14.43 19.67,15.18 19.33,15.90 21.58,17.99 17.99,21.58 15.90,19.33 15.18,19.67 14.43,19.94 14.54,23.01 9.46,23.01 9.57,19.94 8.82,19.67 8.10,19.33 6.01,21.58 2.42,17.99 4.67,15.90 4.33,15.18 4.06,14.43 0.99,14.54 0.99,9.46 4.06,9.57 4.33,8.82 4.67,8.10 2.42,6.01 6.01,2.42 8.10,4.67 8.82,4.33 9.57,4.06 9.46,0.99 14.54,0.99 14.43,4.06 15.18,4.33 15.90,4.67 17.99,2.42 21.58,6.01 19.33,8.10 19.67,8.82" fill="url(#gg)" stroke="#2a7fb5" stroke-width=".6"/><circle cx="12" cy="12" r="3.6" fill="#eaf5fb" stroke="#3a8fc3" stroke-width=".8"/></svg>
<div class="t" style="left:1721.0px;top:654.2px;font-size:15.3px;color:#111;">More</div>
<svg class="a" style="left:1764px;top:659px" width="8" height="5" viewBox="0 0 8 5"><path d="M0 0H8L4.0 5Z" fill="#111"/></svg>
<svg class="a" style="left:2124px;top:647px" width="24" height="24" viewBox="0 0 24 24"><path d="M17.7 6.3A8 8 0 1 0 18.9 16" fill="none" stroke="#a3adb8" stroke-width="6"/><path d="M17.7 6.3A8 8 0 1 0 18.9 16" fill="none" stroke="#e6eef8" stroke-width="3.4"/>
<path d="M22 1.5V11.5H12.5Z" fill="#e6eef8" stroke="#a3adb8" stroke-width="1.3" stroke-linejoin="round"/></svg>
<div class="a" style="left:1341px;top:674px;width:815px;height:31px;background:#eceef0;border-bottom:1.5px solid #bfc2c5"></div>
<div class="a" style="left:1346px;top:683px;width:20px;height:20px;background:#fff;border:1.5px solid #222"></div>
<svg class="a" style="left:1372px;top:684px" width="8" height="14" viewBox="0 0 8 14"><path d="M1 1L7 7L1 13" fill="none" stroke="#c3c7cb" stroke-width="1.2"/></svg>
<svg class="a" style="left:1409px;top:684px" width="8" height="14" viewBox="0 0 8 14"><path d="M1 1L7 7L1 13" fill="none" stroke="#c3c7cb" stroke-width="1.2"/></svg>
<svg class="a" style="left:1472px;top:684px" width="8" height="14" viewBox="0 0 8 14"><path d="M1 1L7 7L1 13" fill="none" stroke="#c3c7cb" stroke-width="1.2"/></svg>
<svg class="a" style="left:1543px;top:684px" width="8" height="14" viewBox="0 0 8 14"><path d="M1 1L7 7L1 13" fill="none" stroke="#c3c7cb" stroke-width="1.2"/></svg>
<svg class="a" style="left:1628px;top:684px" width="8" height="14" viewBox="0 0 8 14"><path d="M1 1L7 7L1 13" fill="none" stroke="#c3c7cb" stroke-width="1.2"/></svg>
<svg class="a" style="left:1698px;top:684px" width="8" height="14" viewBox="0 0 8 14"><path d="M1 1L7 7L1 13" fill="none" stroke="#c3c7cb" stroke-width="1.2"/></svg>
<svg class="a" style="left:1836px;top:684px" width="8" height="14" viewBox="0 0 8 14"><path d="M1 1L7 7L1 13" fill="none" stroke="#c3c7cb" stroke-width="1.2"/></svg>
<div class="t" style="left:1386.5px;top:682.1px;font-size:15.2px;color:#2a55c9;">C:</div>
<div class="t" style="left:1425.0px;top:682.1px;font-size:15.2px;color:#2a55c9;">Users</div>
<div class="t" style="left:1488.5px;top:682.1px;font-size:15.2px;color:#2a55c9;">adam_</div>
<div class="t" style="left:1560.0px;top:682.1px;font-size:15.2px;color:#2a55c9;">Dropbox</div>
<div class="t" style="left:1645.0px;top:682.1px;font-size:15.2px;color:#2a55c9;">Brown</div>
<div class="t" style="left:1715.5px;top:682.1px;font-size:15.2px;color:#2a55c9;">R-Basics-Course</div>
<div class="t" style="left:1853.0px;top:682.1px;font-size:15.2px;color:#2a55c9;">Course Notes</div>
<svg class="a" style="left:2095px;top:678px" width="22" height="24" viewBox="0 0 22 24"><path d="M11.0 1L21 4.84V17.16L11.0 22L1 17.16V4.84Z" fill="#cdeaf0" stroke="#7ec4d3" stroke-width="1"/>
<path d="M1 4.84L11.0 9.68L21 4.84M11.0 9.68V22" fill="none" stroke="#9fd4df" stroke-width=".8"/>
<text x="11.0" y="13.64" font-family="Liberation Serif" font-weight="700" font-size="11.0" fill="#3a6fd0" text-anchor="middle">R</text></svg>
<div class="a" style="left:2124px;top:675px;width:2px;height:29px;background:#b9bdc1"></div>
<div class="a" style="left:2126px;top:675px;width:30px;height:29px;background:linear-gradient(#f2f3f4,#e6e8ea)"></div>
<svg class="a" style="left:2134px;top:688px" width="16" height="5" viewBox="0 0 16 5"><rect x="0" y="0" width="3.5" height="3.5" fill="#111"/><rect x="6" y="0" width="3.5" height="3.5" fill="#111"/><rect x="12" y="0" width="3.5" height="3.5" fill="#111"/></svg>
<div class="a" style="left:1341px;top:705px;width:815px;height:25px;background:#eceef0;border-bottom:2px solid #d5d8db"></div>
<div class="a" style="left:1383px;top:706px;width:1px;height:23px;background:#d3d6d9"></div>
<div class="a" style="left:1421px;top:706px;width:1px;height:23px;background:#d3d6d9"></div>
<div class="a" style="left:1811px;top:706px;width:1px;height:23px;background:#d3d6d9"></div>
<div class="a" style="left:1926px;top:706px;width:1px;height:23px;background:#d3d6d9"></div>
<svg class="a" style="left:1425px;top:712px" width="15" height="10" viewBox="0 0 15 10"><path d="M0 10L7.5 0L15 10Z" fill="#6b7280"/></svg>
<div class="t" style="left:1449.0px;top:710.9px;font-size:15.4px;color:#444;">Name</div>
<div class="t" style="left:1814.0px;top:710.8px;font-size:15.5px;color:#444;">Size</div>
<div class="t" style="left:1929.0px;top:711.4px;font-size:16px;color:#444;">Modified</div>
<svg class="a" style="left:1392px;top:732px" width="22" height="22" viewBox="0 0 22 22"><path d="M9 1L17 9H12V15H20V20H7V9H1Z" fill="#2fb56a" stroke="#1f8f50" stroke-width=".8"/></svg>
<div class="t" style="left:1423.5px;top:737.7px;font-size:16.8px;color:#1a1aa6;">..</div>
<div class="a" style="left:1351px;top:768px;width:20px;height:20px;background:#fff;border:1.5px solid #222"></div>
<svg class="a" style="left:1391px;top:767px" width="26" height="22" viewBox="0 0 26 22"><defs><linearGradient id="fdg" x1="0" y1="0" x2="0" y2="1"><stop offset="0" stop-color="#fbf0a8"/><stop offset="1" stop-color="#eab42e"/></linearGradient></defs>
<path d="M3 6Q3 4 6 4H10Q12 1 15 1H19Q23 1 23.5 5V19H3Z" fill="#f2efe6" stroke="#c9a43a" stroke-width="1.1"/>
<path d="M21 7L24 5.5V18.5L21 20.5Z" fill="#e6eaee" stroke="#b9bfc4" stroke-width=".8"/>
<rect x="1.5" y="7" width="20" height="13.5" rx="1" fill="url(#fdg)" stroke="#c49a2c" stroke-width="1.1"/></svg>
<div class="t" style="left:1423.5px;top:772.7px;font-size:16.8px;color:#1a1aa6;">.cache</div>
<div class="a" style="left:1351px;top:803px;width:20px;height:20px;background:#fff;border:1.5px solid #222"></div>
<svg class="a" style="left:1392px;top:801px" width="22" height="24" viewBox="0 0 22 24"><path d="M3 1H14L20 7V22H3Z" fill="#fafbfc" stroke="#a8afb5" stroke-width="1.2"/><path d="M14 1V7H20" fill="#eef1f3" stroke="#a8afb5" stroke-width="1"/></svg>
<div class="t" style="left:1423.5px;top:807.7px;font-size:16.8px;color:#1a1aa6;">.nojekyll</div>
<div class="t" style="left:1812.5px;top:809.2px;font-size:16px;color:#555;">0 B</div>
<div class="t" style="left:1927.5px;top:809.0px;font-size:16.2px;color:#555;">Feb 9, 2017, 9:38 AM</div>
<div class="a" style="left:1351px;top:838px;width:20px;height:20px;background:#fff;border:1.5px solid #222"></div>
<svg class="a" style="left:1390px;top:835px" width="24" height="24" viewBox="0 0 24 24"><path d="M6 1H16L22 7V22H6Z" fill="#fafbfc" stroke="#a3a9ae" stroke-width="1.3"/><path d="M16 1V7H22" fill="#eef1f3" stroke="#a3a9ae" stroke-width="1"/><defs><radialGradient id="glb" cx="40%" cy="35%" r="70%"><stop offset="0" stop-color="#5fc3f0"/><stop offset="1" stop-color="#1677c4"/></radialGradient></defs>
<circle cx="8.5" cy="10" r="6.6" fill="url(#glb)"/><path d="M4.5 5Q7 3.5 9.5 5L9 8Q7.5 10 6.5 9Q5.5 7 4.5 6.5Z" fill="#eab040"/><path d="M9.5 11Q12.5 10 14.5 11.5Q13.5 15 11 16Q10.5 13 9.5 12Z" fill="#f0c43c"/></svg>
<div class="t" style="left:1423.5px;top:842.7px;font-size:16.8px;color:#1a1aa6;">01_workflow.html</div>
<div class="t" style="left:1812.5px;top:844.2px;font-size:16px;color:#555;">14.4 KB</div>
<div class="t" style="left:1927.5px;top:844.0px;font-size:16.2px;color:#555;">Feb 9, 2017, 5:11 PM</div>
<div class="a" style="left:1351px;top:873px;width:20px;height:20px;background:#fff;border:1.5px solid #222"></div>
<svg class="a" style="left:1390px;top:870px" width="24" height="24" viewBox="0 0 24 24"><path d="M6 1H16L22 7V22H6Z" fill="#fafbfc" stroke="#a3a9ae" stroke-width="1.3"/><path d="M16 1V7H22" fill="#eef1f3" stroke="#a3a9ae" stroke-width="1"/><text x="-0.5" y="16.5" font-family="Liberation Sans" font-weight="700" font-size="9.5" fill="#8f23ad" textLength="15" lengthAdjust="spacingAndGlyphs">MD</text></svg>
<div class="t" style="left:1423.5px;top:877.7px;font-size:16.8px;color:#1a1aa6;">01_workflow.md</div>
<div class="t" style="left:1812.5px;top:879.2px;font-size:16px;color:#555;">4.8 KB</div>
<div class="t" style="left:1927.5px;top:879.0px;font-size:16.2px;color:#555;">Feb 9, 2017, 5:11 PM</div>
<div class="a" style="left:1351px;top:908px;width:20px;height:20px;background:#fff;border:1.5px solid #222"></div>
<svg class="a" style="left:1390px;top:905px" width="24" height="24" viewBox="0 0 24 24"><path d="M6 1H16L22 7V22H6Z" fill="#fafbfc" stroke="#a3a9ae" stroke-width="1.3"/><path d="M16 1V7H22" fill="#eef1f3" stroke="#a3a9ae" stroke-width="1"/><defs><radialGradient id="rmg" cx="45%" cy="30%" r="70%"><stop offset="0" stop-color="#d0587c"/><stop offset="1" stop-color="#8c1e3c"/></radialGradient></defs>
<circle cx="8.7" cy="10.5" r="7" fill="url(#rmg)"/><text x="8.7" y="12.5" font-family="Liberation Sans" font-weight="700" font-size="5.5" fill="#fff" text-anchor="middle">Rmd</text></svg>
<div class="t" style="left:1423.5px;top:912.7px;font-size:16.8px;color:#1a1aa6;">01_workflow.Rmd</div>
<div class="t" style="left:1812.5px;top:914.2px;font-size:16px;color:#555;">4.8 KB</div>
<div class="t" style="left:1927.5px;top:914.0px;font-size:16.2px;color:#555;">Feb 9, 2017, 5:11 PM</div>
<div class="a" style="left:1351px;top:943px;width:20px;height:20px;background:#fff;border:1.5px solid #222"></div>
<svg class="a" style="left:1390px;top:940px" width="24" height="24" viewBox="0 0 24 24"><path d="M6 1H16L22 7V22H6Z" fill="#fafbfc" stroke="#a3a9ae" stroke-width="1.3"/><path d="M16 1V7H22" fill="#eef1f3" stroke="#a3a9ae" stroke-width="1"/><defs><radialGradient id="glb" cx="40%" cy="35%" r="70%"><stop offset="0" stop-color="#5fc3f0"/><stop offset="1" stop-color="#1677c4"/></radialGradient></defs>
<circle cx="8.5" cy="10" r="6.6" fill="url(#glb)"/><path d="M4.5 5Q7 3.5 9.5 5L9 8Q7.5 10 6.5 9Q5.5 7 4.5 6.5Z" fill="#eab040"/><path d="M9.5 11Q12.5 10 14.5 11.5Q13.5 15 11 16Q10.5 13 9.5 12Z" fill="#f0c43c"/></svg>
<div class="t" style="left:1423.5px;top:947.7px;font-size:16.8px;color:#1a1aa6;">02_getting_r.html</div>
<div class="t" style="left:1812.5px;top:949.2px;font-size:16px;color:#555;">7.3 KB</div>
<div class="t" style="left:1927.5px;top:949.0px;font-size:16.2px;color:#555;">Feb 9, 2017, 5:34 PM</div>
<div class="a" style="left:1351px;top:978px;width:20px;height:20px;background:#fff;border:1.5px solid #222"></div>
<svg class="a" style="left:1390px;top:975px" width="24" height="24" viewBox="0 0 24 24"><path d="M6 1H16L22 7V22H6Z" fill="#fafbfc" stroke="#a3a9ae" stroke-width="1.3"/><path d="M16 1V7H22" fill="#eef1f3" stroke="#a3a9ae" stroke-width="1"/><text x="-0.5" y="16.5" font-family="Liberation Sans" font-weight="700" font-size="9.5" fill="#8f23ad" textLength="15" lengthAdjust="spacingAndGlyphs">MD</text></svg>
<div class="t" style="left:1423.5px;top:982.7px;font-size:16.8px;color:#1a1aa6;">02_getting_r.md</div>
<div class="t" style="left:1812.5px;top:984.2px;font-size:16px;color:#555;">1.8 KB</div>
<div class="t" style="left:1927.5px;top:984.0px;font-size:16.2px;color:#555;">Feb 9, 2017, 5:34 PM</div>
<div class="a" style="left:1351px;top:1013px;width:20px;height:20px;background:#fff;border:1.5px solid #222"></div>
<svg class="a" style="left:1390px;top:1010px" width="24" height="24" viewBox="0 0 24 24"><path d="M6 1H16L22 7V22H6Z" fill="#fafbfc" stroke="#a3a9ae" stroke-width="1.3"/><path d="M16 1V7H22" fill="#eef1f3" stroke="#a3a9ae" stroke-width="1"/><defs><radialGradient id="rmg" cx="45%" cy="30%" r="70%"><stop offset="0" stop-color="#d0587c"/><stop offset="1" stop-color="#8c1e3c"/></radialGradient></defs>
<circle cx="8.7" cy="10.5" r="7" fill="url(#rmg)"/><text x="8.7" y="12.5" font-family="Liberation Sans" font-weight="700" font-size="5.5" fill="#fff" text-anchor="middle">Rmd</text></svg>
<div class="t" style="left:1423.5px;top:1017.7px;font-size:16.8px;color:#1a1aa6;">02_getting_r.Rmd</div>
<div class="t" style="left:1812.5px;top:1019.2px;font-size:16px;color:#555;">1.8 KB</div>
<div class="t" style="left:1927.5px;top:1019.0px;font-size:16.2px;color:#555;">Feb 9, 2017, 5:34 PM</div>
<div class="a" style="left:1351px;top:1048px;width:20px;height:20px;background:#fff;border:1.5px solid #222"></div>
<svg class="a" style="left:1391px;top:1047px" width="26" height="22" viewBox="0 0 26 22"><defs><linearGradient id="fdg" x1="0" y1="0" x2="0" y2="1"><stop offset="0" stop-color="#fbf0a8"/><stop offset="1" stop-color="#eab42e"/></linearGradient></defs>
<path d="M3 6Q3 4 6 4H10Q12 1 15 1H19Q23 1 23.5 5V19H3Z" fill="#f2efe6" stroke="#c9a43a" stroke-width="1.1"/>
<path d="M21 7L24 5.5V18.5L21 20.5Z" fill="#e6eaee" stroke="#b9bfc4" stroke-width=".8"/>
<rect x="1.5" y="7" width="20" height="13.5" rx="1" fill="url(#fdg)" stroke="#c49a2c" stroke-width="1.1"/></svg>
<div class="t" style="left:1423.5px;top:1052.7px;font-size:16.8px;color:#1a1aa6;">assets</div>
<div class="a" style="left:1351px;top:1083px;width:20px;height:20px;background:#fff;border:1.5px solid #222"></div>
<svg class="a" style="left:1391px;top:1082px" width="26" height="22" viewBox="0 0 26 22"><defs><linearGradient id="fdg" x1="0" y1="0" x2="0" y2="1"><stop offset="0" stop-color="#fbf0a8"/><stop offset="1" stop-color="#eab42e"/></linearGradient></defs>
<path d="M3 6Q3 4 6 4H10Q12 1 15 1H19Q23 1 23.5 5V19H3Z" fill="#f2efe6" stroke="#c9a43a" stroke-width="1.1"/>
<path d="M21 7L24 5.5V18.5L21 20.5Z" fill="#e6eaee" stroke="#b9bfc4" stroke-width=".8"/>
<rect x="1.5" y="7" width="20" height="13.5" rx="1" fill="url(#fdg)" stroke="#c49a2c" stroke-width="1.1"/></svg>
<div class="t" style="left:1423.5px;top:1087.7px;font-size:16.8px;color:#1a1aa6;">figure</div>
<div class="a" style="left:1351px;top:1118px;width:20px;height:20px;background:#fff;border:1.5px solid #222"></div>
<svg class="a" style="left:1390px;top:1115px" width="24" height="24" viewBox="0 0 24 24"><path d="M6 1H16L22 7V22H6Z" fill="#fafbfc" stroke="#a3a9ae" stroke-width="1.3"/><path d="M16 1V7H22" fill="#eef1f3" stroke="#a3a9ae" stroke-width="1"/><defs><radialGradient id="glb" cx="40%" cy="35%" r="70%"><stop offset="0" stop-color="#5fc3f0"/><stop offset="1" stop-color="#1677c4"/></radialGradient></defs>
<circle cx="8.5" cy="10" r="6.6" fill="url(#glb)"/><path d="M4.5 5Q7 3.5 9.5 5L9 8Q7.5 10 6.5 9Q5.5 7 4.5 6.5Z" fill="#eab040"/><path d="M9.5 11Q12.5 10 14.5 11.5Q13.5 15 11 16Q10.5 13 9.5 12Z" fill="#f0c43c"/></svg>
<div class="t" style="left:1423.5px;top:1122.7px;font-size:16.8px;color:#1a1aa6;">index.html</div>
<div class="t" style="left:1812.5px;top:1124.2px;font-size:16px;color:#555;">7 KB</div>
<div class="t" style="left:1927.5px;top:1124.0px;font-size:16.2px;color:#555;">Feb 9, 2017, 5:12 PM</div>
<div class="a" style="left:1351px;top:1153px;width:20px;height:20px;background:#fff;border:1.5px solid #222"></div>
<svg class="a" style="left:1390px;top:1150px" width="24" height="24" viewBox="0 0 24 24"><path d="M6 1H16L22 7V22H6Z" fill="#fafbfc" stroke="#a3a9ae" stroke-width="1.3"/><path d="M16 1V7H22" fill="#eef1f3" stroke="#a3a9ae" stroke-width="1"/><text x="-0.5" y="16.5" font-family="Liberation Sans" font-weight="700" font-size="9.5" fill="#8f23ad" textLength="15" lengthAdjust="spacingAndGlyphs">MD</text></svg>
<div class="t" style="left:1423.5px;top:1157.7px;font-size:16.8px;color:#1a1aa6;">index.md</div>
<div class="t" style="left:1812.5px;top:1159.2px;font-size:16px;color:#555;">1.7 KB</div>
<div class="t" style="left:1927.5px;top:1159.0px;font-size:16.2px;color:#555;">Feb 9, 2017, 5:12 PM</div>
<div class="a" style="left:1351px;top:1188px;width:20px;height:20px;background:#fff;border:1.5px solid #222"></div>
<svg class="a" style="left:1390px;top:1185px" width="24" height="24" viewBox="0 0 24 24"><path d="M6 1H16L22 7V22H6Z" fill="#fafbfc" stroke="#a3a9ae" stroke-width="1.3"/><path d="M16 1V7H22" fill="#eef1f3" stroke="#a3a9ae" stroke-width="1"/><defs><radialGradient id="rmg" cx="45%" cy="30%" r="70%"><stop offset="0" stop-color="#d0587c"/><stop offset="1" stop-color="#8c1e3c"/></radialGradient></defs>
<circle cx="8.7" cy="10.5" r="7" fill="url(#rmg)"/><text x="8.7" y="12.5" font-family="Liberation Sans" font-weight="700" font-size="5.5" fill="#fff" text-anchor="middle">Rmd</text></svg>
<div class="t" style="left:1423.5px;top:1192.7px;font-size:16.8px;color:#1a1aa6;">index.Rmd</div>
<div class="t" style="left:1812.5px;top:1194.2px;font-size:16px;color:#555;">1.7 KB</div>
<div class="t" style="left:1927.5px;top:1194.0px;font-size:16.2px;color:#555;">Feb 9, 2017, 5:12 PM</div>
<div class="a" style="left:1351px;top:1223px;width:20px;height:20px;background:#fff;border:1.5px solid #222"></div>
<svg class="a" style="left:1391px;top:1222px" width="26" height="22" viewBox="0 0 26 22"><defs><linearGradient id="fdg" x1="0" y1="0" x2="0" y2="1"><stop offset="0" stop-color="#fbf0a8"/><stop offset="1" stop-color="#eab42e"/></linearGradient></defs>
<path d="M3 6Q3 4 6 4H10Q12 1 15 1H19Q23 1 23.5 5V19H3Z" fill="#f2efe6" stroke="#c9a43a" stroke-width="1.1"/>
<path d="M21 7L24 5.5V18.5L21 20.5Z" fill="#e6eaee" stroke="#b9bfc4" stroke-width=".8"/>
<rect x="1.5" y="7" width="20" height="13.5" rx="1" fill="url(#fdg)" stroke="#c49a2c" stroke-width="1.1"/></svg>
<div class="t" style="left:1423.5px;top:1227.7px;font-size:16.8px;color:#1a1aa6;">libraries</div>
<div class="a" style="left:1319px;top:105px;width:870px;height:522px;border:8px solid #ed1c24"></div>
<div class="a" style="left:1331px;top:121px;width:843px;height:493px;border:5px solid #ed1c24"></div>
</body></html>
